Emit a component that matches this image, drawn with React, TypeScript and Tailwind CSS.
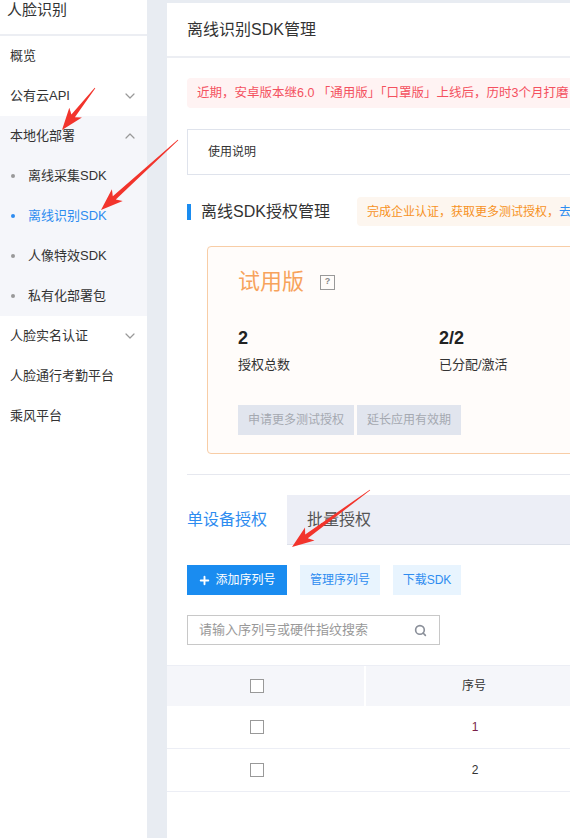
import { ChevronDown, ChevronUp, Search, Plus } from 'lucide-react'

const font = { fontFamily: '"Liberation Sans", "Noto Sans CJK SC", sans-serif' }

// build a tapered arrow polygon from tail to tip
function arrowPoints(tx: number, ty: number, hx: number, hy: number) {
  const dx = hx - tx
  const dy = hy - ty
  const len = Math.hypot(dx, dy)
  const ux = dx / len
  const uy = dy / len
  const px = -uy
  const py = ux
  const headLen = 22
  const headW = 8
  const bx = hx - ux * headLen
  const by = hy - uy * headLen
  const neck = 2.2
  const pts = [
    [tx + px * 0.4, ty + py * 0.4],
    [bx + ux * 4 + px * neck, by + uy * 4 + py * neck],
    [bx + px * headW, by + py * headW],
    [hx, hy],
    [bx - px * headW, by - py * headW],
    [bx + ux * 4 - px * neck, by + uy * 4 - py * neck],
    [tx - px * 0.4, ty - py * 0.4],
  ]
  return pts.map((p) => `${p[0].toFixed(1)},${p[1].toFixed(1)}`).join(' ')
}

const menu = [
  { label: '概览' },
  { label: '公有云API', chevron: 'down' },
]

const subItems = [
  { label: '离线采集SDK' },
  { label: '离线识别SDK', active: true },
  { label: '人像特效SDK' },
  { label: '私有化部署包' },
]

const bottomMenu = [
  { label: '人脸实名认证', chevron: 'down' },
  { label: '人脸通行考勤平台' },
  { label: '乘风平台' },
]

function MenuRow({ label, chevron }: { label: string; chevron?: string }) {
  return (
    <div className="h-[40px] flex items-center justify-between pl-[10px] pr-[9px] text-[13px] text-[#333]">
      <span>{label}</span>
      {chevron === 'down' && <ChevronDown size={16} strokeWidth={1.8} className="text-[#999]" />}
      {chevron === 'up' && <ChevronUp size={16} strokeWidth={1.8} className="text-[#999]" />}
    </div>
  )
}

export default function App() {
  return (
    <div className="relative w-[570px] h-[838px] overflow-hidden bg-[#e8ecf2] flex" style={font}>
      {/* Sidebar */}
      <aside className="w-[147px] shrink-0 bg-white">
        <div className="h-[36px] border-b-2 border-[#eceef3] pl-[7px] text-[15px] leading-[20px] text-[#333]">
          人脸识别
        </div>
        {menu.map((m) => (
          <MenuRow key={m.label} {...m} />
        ))}
        <div className="bg-[#f5f6fa]">
          <MenuRow label="本地化部署" chevron="up" />
          {subItems.map((s) => (
            <div
              key={s.label}
              className={`h-[40px] flex items-center pl-[11px] text-[13px] ${s.active ? 'text-[#2e8cf0]' : 'text-[#333]'}`}
            >
              <span className={`w-[4px] h-[4px] rounded-full mr-[13px] ${s.active ? 'bg-[#2e8cf0]' : 'bg-[#999]'}`} />
              {s.label}
            </div>
          ))}
        </div>
        {bottomMenu.map((m) => (
          <MenuRow key={m.label} {...m} />
        ))}
      </aside>

      {/* Main panel */}
      <main className="ml-[20px] mt-[3px] w-[800px] shrink-0 bg-white">
        <div className="h-[55px] flex items-center pl-[20px] border-b-2 border-[#eceef3] text-[16px] text-[#333]">
          离线识别SDK管理
        </div>

        <div className="mx-[20px] mt-[20px] h-[30px] rounded-[4px] bg-[#fff3f3] flex items-center pl-[10px] text-[12.5px] text-[#f4515f] whitespace-nowrap">
          近期，安卓版本继6.0 「通用版」「口罩版」上线后，历时3个月打磨，全新升级的7.0版本正式发布
        </div>

        <div className="mx-[20px] mt-[21px] h-[46px] border border-[#dfe3ec] flex items-center pl-[20px] text-[12px] text-[#333]">
          使用说明
        </div>

        <div className="mx-[20px] mt-[22px] flex items-center">
          <span className="w-[4px] h-[16px] bg-[#1a8cf0]" />
          <span className="ml-[10px] text-[16px] text-[#333]">离线SDK授权管理</span>
          <div className="ml-[27px] h-[29px] rounded-[4px] bg-[#fdf6ef] flex items-center px-[10px] text-[12px] text-[#f7921e] whitespace-nowrap">
            完成企业认证，获取更多测试授权，<span className="text-[#2e8cf0]">去认证</span>
          </div>
        </div>

        {/* Trial card */}
        <div className="ml-[40px] mt-[20px] mr-[20px] h-[208px] rounded-[4px] border border-[#f8cda6] bg-[#fffcfa] pl-[30px] pt-[22px]">
          <div className="flex items-center">
            <span className="text-[22px] leading-[26px] text-[#f7a35c]">试用版</span>
            <span className="ml-[16px] w-[15px] h-[15px] border border-[#999] flex items-center justify-center text-[9px] font-bold text-[#888]">
              ?
            </span>
          </div>
          <div className="mt-[32px] flex">
            <div className="w-[201px]">
              <div className="text-[18px] leading-[22px] font-bold text-[#222]">2</div>
              <div className="mt-[7px] text-[13px] leading-[18px] text-[#333]">授权总数</div>
            </div>
            <div>
              <div className="text-[18px] leading-[22px] font-bold text-[#222]">2/2</div>
              <div className="mt-[7px] text-[13px] leading-[18px] text-[#333]">已分配/激活</div>
            </div>
          </div>
          <div className="mt-[31px] flex gap-[3px]">
            <div className="w-[116px] h-[30px] bg-[#e1e5ee] flex items-center justify-center text-[12px] text-[#a5a9b1]">
              申请更多测试授权
            </div>
            <div className="w-[104px] h-[30px] bg-[#e1e5ee] flex items-center justify-center text-[12px] text-[#a5a9b1]">
              延长应用有效期
            </div>
          </div>
        </div>

        <div className="ml-[20px] mt-[20px] border-t border-[#e6e8ef]" />

        {/* Tabs */}
        <div className="mt-[20px] h-[50px] bg-[#eceef6] border-b border-[#dde1ea] flex">
          <div className="w-[120px] h-[50px] bg-white flex items-center pl-[20px] text-[16px] text-[#2e8cf0]">
            单设备授权
          </div>
          <div className="flex items-center pl-[20px] text-[16px] text-[#555]">批量授权</div>
        </div>

        <div className="mt-[20px] ml-[20px] flex gap-[13px]">
          <div className="w-[100px] h-[30px] bg-[#1a8cf0] flex items-center justify-center text-[12px] text-white">
            <Plus size={13} strokeWidth={3.5} className="mr-[4px]" />
            添加序列号
          </div>
          <div className="w-[80px] h-[30px] bg-[#e8f4fe] flex items-center justify-center text-[12px] text-[#2e8cf0]">
            管理序列号
          </div>
          <div className="w-[68px] h-[30px] bg-[#e8f4fe] flex items-center justify-center text-[12px] text-[#2e8cf0]">
            下载SDK
          </div>
        </div>

        <div className="mt-[20px] ml-[20px] w-[253px] h-[30px] border border-[#c8c8c8] flex items-center justify-between pl-[11px] pr-[12px]">
          <span className="text-[13px] text-[#999]">请输入序列号或硬件指纹搜索</span>
          <Search size={13} strokeWidth={3} className="text-[#8a8f99]" />
        </div>

        {/* Table */}
        <div className="mt-[20px] border-t border-[#eceef5]">
          <div className="h-[40px] bg-[#f5f6fa] flex">
            <div className="w-[199px] flex items-center pl-[83px] border-r-2 border-white">
              <span className="w-[14px] h-[14px] border border-[#999] bg-white" />
            </div>
            <div className="w-[216px] flex items-center justify-center text-[12px] text-[#333]">序号</div>
          </div>
          {[1, 2].map((n) => (
            <div key={n} className="h-[43px] flex border-b border-[#eceef5]">
              <div className="w-[199px] flex items-center pl-[83px]">
                <span className="w-[14px] h-[14px] border border-[#999] bg-white" />
              </div>
              <div
                className={`w-[218px] flex items-center justify-center text-[12px] ${n === 1 ? 'text-[#7a1f4a]' : 'text-[#333]'}`}
              >
                {n}
              </div>
            </div>
          ))}
        </div>
      </main>

      {/* Annotation arrows */}
      <svg className="absolute inset-0 pointer-events-none" width="570" height="838" viewBox="0 0 570 838">
        <polygon points={arrowPoints(95, 88, 62, 130)} fill="#f2342c" />
        <polygon points={arrowPoints(178, 140, 101, 210)} fill="#f2342c" />
        <polygon points={arrowPoints(370, 490, 292, 547)} fill="#f2342c" />
      </svg>
    </div>
  )
}
